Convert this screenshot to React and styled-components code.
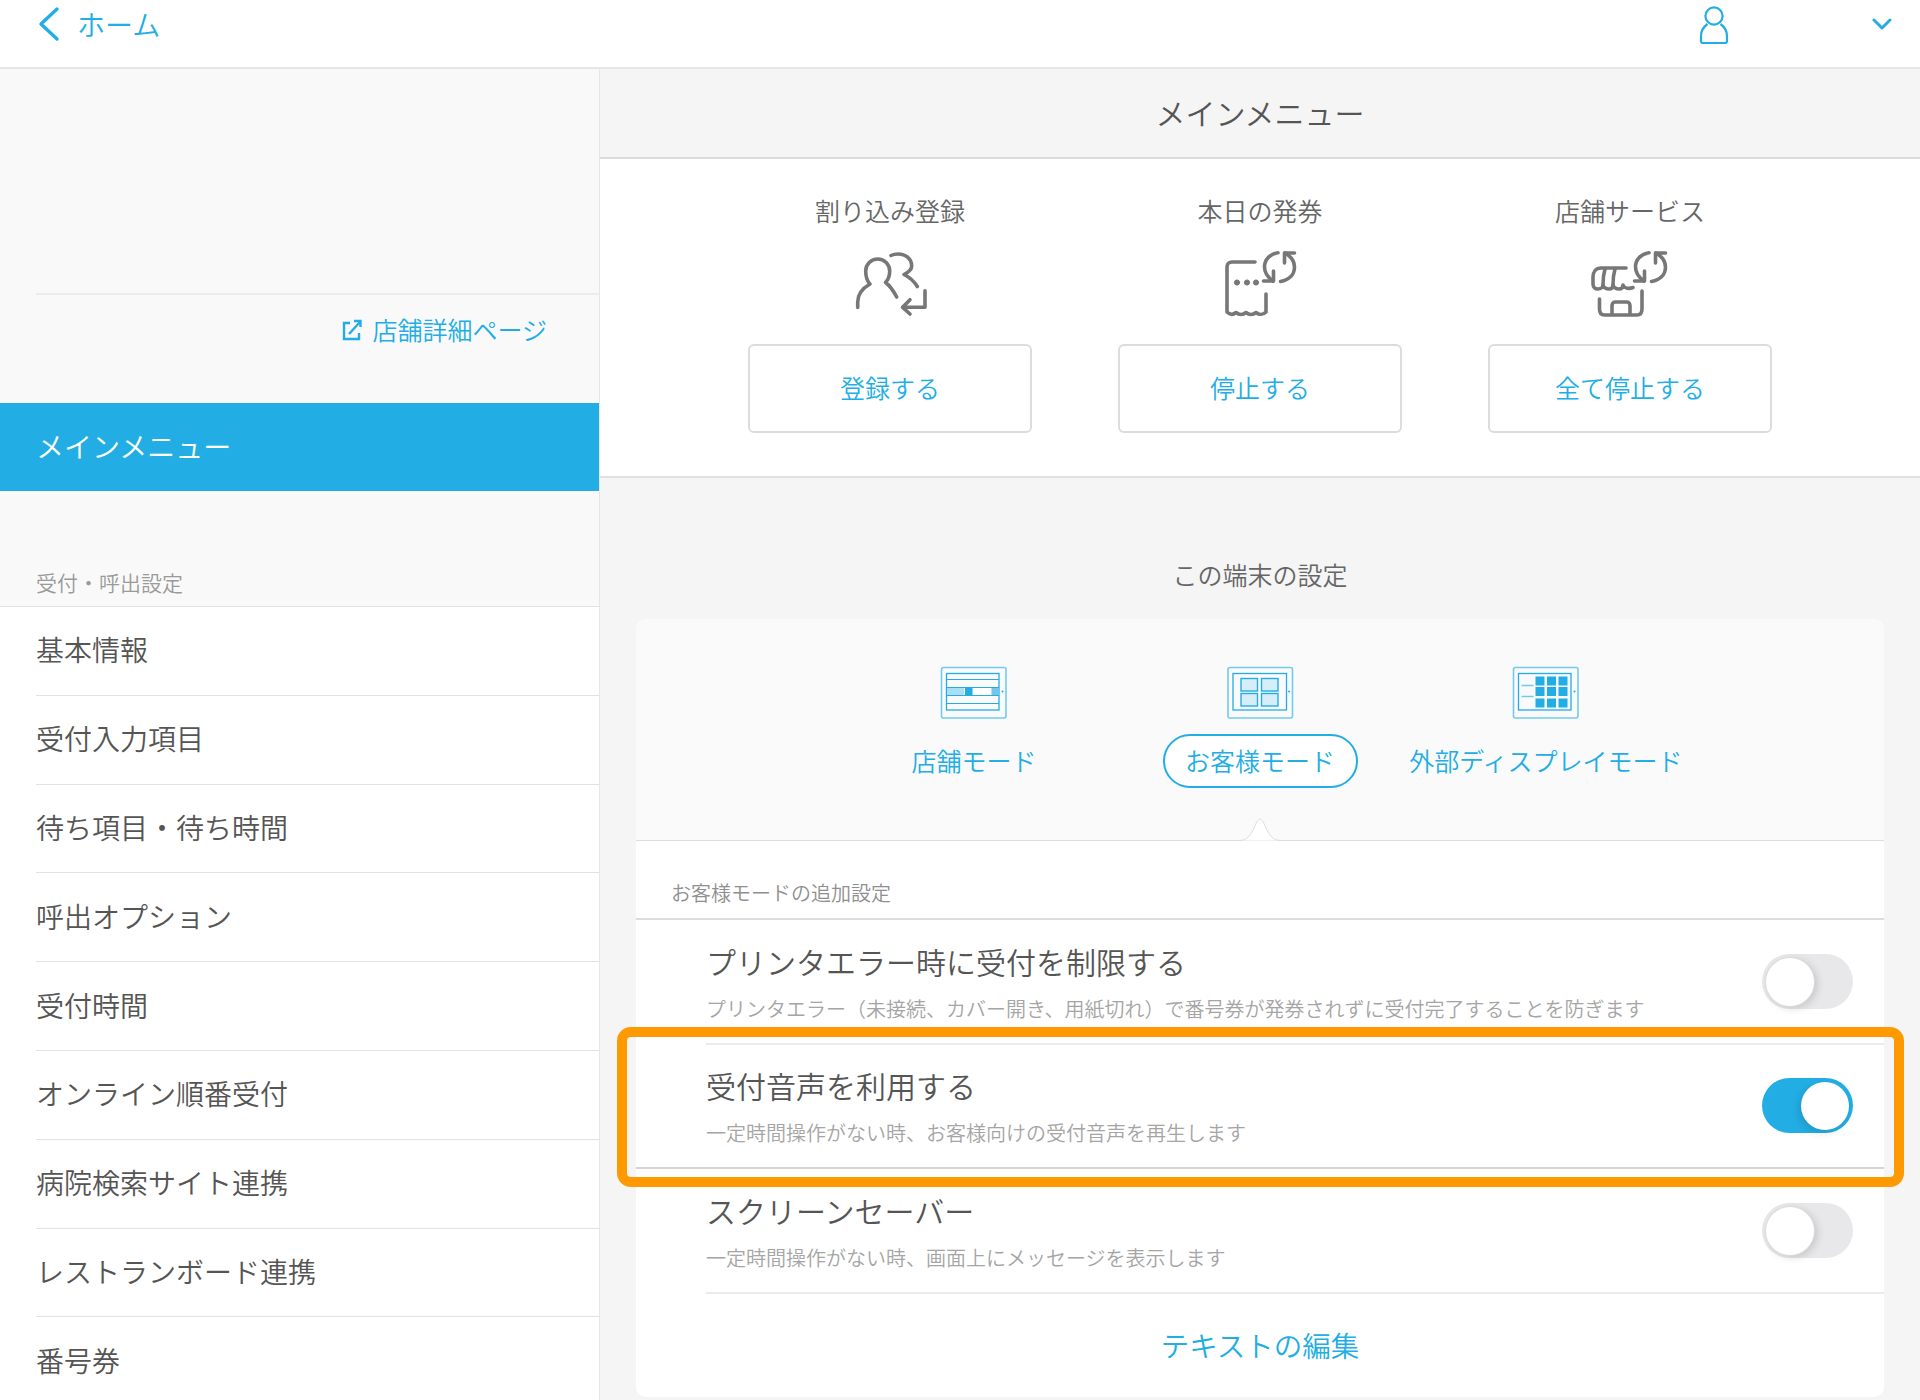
import React from "react";
import styled, { createGlobalStyle } from "styled-components";

const BLUE = "#22aee4";

const GlobalStyle = createGlobalStyle`
  html, body {
    margin: 0;
    padding: 0;
    background: #f5f5f5;
    font-family: "Noto Sans CJK JP", "Noto Sans", sans-serif;
    font-weight: 350;
  }
  * { box-sizing: border-box; }
`;

const Page = styled.div`
  position: relative;
  width: 1920px;
  height: 1400px;
  overflow: hidden;
`;

const TopBar = styled.header`
  display: flex;
  justify-content: space-between;
  align-items: flex-start;
  height: 69px;
  background: #fff;
  border-bottom: 2px solid #e6e6e6;
  padding: 5px 28px 0 36px;
  color: ${BLUE};
`;

const BackLink = styled.div`
  display: flex;
  align-items: center;
  gap: 15px;
  height: 38px;
  font-size: 28px;
`;

const UserArea = styled.div`
  display: flex;
  align-items: flex-start;
  gap: 143px;
`;

const Body = styled.div`
  display: flex;
  height: 1331px;
`;

const Sidebar = styled.aside`
  width: 600px;
  flex: none;
  background: #f9f9f9;
  border-right: 1px solid #e6e6e6;
`;

const ShopBox = styled.div`
  height: 224px;
`;

const ShopLink = styled.div`
  display: flex;
  align-items: flex-start;
  justify-content: flex-end;
  gap: 10px;
  height: 110px;
  margin-left: 36px;
  padding: 17px 52px 0 0;
  border-top: 2px solid #ececec;
  color: ${BLUE};
  font-size: 25px;
  line-height: 34px;
`;

const ActiveItem = styled.div`
  display: flex;
  align-items: center;
  height: 88px;
  padding: 0 0 3px 36px;
  background: ${BLUE};
  color: #fff;
  font-size: 28px;
`;

const GroupLabel = styled.div`
  display: flex;
  align-items: flex-end;
  height: 116px;
  padding: 0 0 9px 36px;
  border-bottom: 1px solid #e2e2e2;
  color: #9a9a9a;
  font-size: 21px;
  line-height: 30px;
`;

const MenuRow = styled.div`
  height: 88.8px;
  background: #fff;
`;

const MenuText = styled.div`
  display: flex;
  align-items: center;
  height: 88.8px;
  margin-left: 36px;
  padding-bottom: 3px;
  border-bottom: 1px solid #e2e2e2;
  color: #555;
  font-size: 28px;
`;

const Main = styled.main`
  flex: 1;
  display: flex;
  flex-direction: column;
  align-items: center;
`;

const MainTitle = styled.div`
  display: flex;
  align-items: center;
  justify-content: center;
  width: 100%;
  height: 90px;
  padding-bottom: 3px;
  border-bottom: 2px solid #dcdcdc;
  color: #555;
  font-size: 30px;
`;

const ActionPanel = styled.section`
  display: grid;
  grid-template-columns: repeat(3, 370px);
  justify-content: center;
  width: 100%;
  height: 319px;
  padding-top: 34px;
  background: #fff;
  border-bottom: 2px solid #e0e0e0;
`;

const ActionCol = styled.div`
  display: flex;
  flex-direction: column;
  align-items: center;
  color: #666;
  font-size: 25px;
  line-height: 34px;
`;

const ActionIcon = styled.svg`
  display: block;
  margin: 17px 0 20px;
  fill: none;
  stroke: #777;
  stroke-width: 3.6;
  stroke-linecap: round;
  stroke-linejoin: round;
`;

const ActionButton = styled.div`
  display: flex;
  align-items: center;
  justify-content: center;
  width: 284px;
  height: 89px;
  padding-bottom: 3px;
  background: #fff;
  border: 2px solid #dcdcdc;
  border-radius: 6px;
  color: ${BLUE};
  font-size: 25px;
`;

const SectionTitle = styled.div`
  margin-top: 79px;
  height: 34px;
  color: #666;
  font-size: 25px;
  line-height: 34px;
`;

const SettingsCard = styled.section`
  width: 1248px;
  height: 778px;
  margin-top: 28px;
  background: #fff;
  border-radius: 10px;
  overflow: hidden;
`;

const ModeTabs = styled.div`
  position: relative;
  display: grid;
  grid-template-columns: repeat(3, 286px);
  justify-content: center;
  height: 222px;
  padding-top: 40px;
  background: #fafafa;
  border-bottom: 1px solid #dedede;
`;

const ModeTab = styled.div`
  display: flex;
  flex-direction: column;
  align-items: center;
`;

const ModeIcon = styled.svg`
  display: block;
  margin-bottom: 11px;
  fill: none;
`;

const ModeLabel = styled.div`
  display: flex;
  align-items: center;
  justify-content: center;
  height: 54px;
  padding-bottom: 2px;
  width: ${(p) => (p.$active ? "195px" : "auto")};
  border: 2px solid ${(p) => (p.$active ? BLUE : "transparent")};
  border-radius: 27px;
  background: ${(p) => (p.$active ? "#fff" : "transparent")};
  color: ${BLUE};
  font-size: 25px;
  white-space: nowrap;
`;

const TabCaret = styled.svg`
  position: absolute;
  left: 50%;
  bottom: -1px;
  margin-left: -22px;
`;

const AddonLabel = styled.div`
  display: flex;
  align-items: flex-end;
  height: 79px;
  padding: 0 0 10px 35px;
  border-bottom: 2px solid #dcdcdc;
  color: #8f8f8f;
  font-size: 20px;
  line-height: 30px;
`;

const SettingRow = styled.div`
  display: flex;
  align-items: center;
  justify-content: space-between;
  height: 124.5px;
  margin-left: ${(p) => (p.$flush ? "0" : "70px")};
  padding: 0 31px 0 ${(p) => (p.$flush ? "70px" : "0")};
  border-bottom: ${(p) => (p.$flush ? "2px solid #d4d4d4" : "2px solid #ebebeb")};
`;

const SettingTitle = styled.div`
  color: #555;
  font-size: 30px;
  line-height: 42px;
`;

const SettingHint = styled.div`
  margin-top: 13px;
  color: #a5a5a5;
  font-size: 20px;
  line-height: 28px;
`;

const Toggle = styled.div`
  position: relative;
  width: 91px;
  height: 55px;
  flex: none;
  border-radius: 28px;
  background: ${(p) => (p.$on ? BLUE : "#e8e8ea")};
`;

const Knob = styled.div`
  position: absolute;
  top: 4px;
  left: ${(p) => (p.$on ? "39px" : "4px")};
  width: 48px;
  height: 48px;
  border-radius: 50%;
  background: #fff;
  box-shadow: ${(p) =>
    p.$on
      ? "-3px 3px 8px rgba(0,0,0,.12)"
      : "0 0 0 1px #dcdcdc, 3px 2px 8px rgba(0,0,0,.16)"};
`;

const EditLink = styled.div`
  display: flex;
  align-items: center;
  justify-content: center;
  height: 105px;
  padding-bottom: 4px;
  color: ${BLUE};
  font-size: 28.5px;
`;

const Highlight = styled.div`
  position: absolute;
  left: 617px;
  top: 1027px;
  width: 1287px;
  height: 160px;
  border: 10px solid #ff9900;
  border-radius: 14px;
  pointer-events: none;
`;

const menuItems = [
  "基本情報",
  "受付入力項目",
  "待ち項目・待ち時間",
  "呼出オプション",
  "受付時間",
  "オンライン順番受付",
  "病院検索サイト連携",
  "レストランボード連携",
  "番号券",
];

const refreshArrows = (dx = 0) => (
  <g transform={`translate(${dx} 0)`}>
    <path d="M68 8.8C60 10 54.5 15.5 54.5 23C54.5 28.5 58 33.5 63 37" />
    <path d="M63.5 27V37H53.5" />
    <path d="M70.5 37.5C78.5 36 84.5 31 84.5 23C84.5 17.5 81 12.5 75 9" />
    <path d="M74.5 19V9H84.5" />
  </g>
);

const QueueIcon = () => (
  <ActionIcon width="100" height="80" viewBox="0 0 100 80">
    <path d="M17.7 63.5V58C17.7 49 23 44 30 40C27 37 25.7 32 25.7 27A12 12 0 0 1 49.7 27C49.7 32 48 36 45.5 38.5C49 41 53 46 56.7 53" />
    <path d="M51 11.5C53 10.5 55 10 58 10C66 10 71.7 15 71.7 22C71.7 25 69 28 64 30.5C69 33 74 37 77.3 42.5" />
    <path d="M85 46.7V63.3H62.7" />
    <path d="M70 55.7L62.7 63.3L70 70" />
  </ActionIcon>
);

const TicketIcon = () => (
  <ActionIcon width="100" height="80" viewBox="0 0 100 80">
    <path d="M45 18H22C19 18 17 20 17 23V68C20 71 23 71 26 68.5C29 71 33 71 36 68.5C39 71 43 71 46 68.5C49 71 53 71 56 68V50" />
    <circle cx="27" cy="38.5" r="2.6" fill="#777" strokeWidth="1" />
    <circle cx="37" cy="38.5" r="2.6" fill="#777" strokeWidth="1" />
    <circle cx="46" cy="38.5" r="2.6" fill="#777" strokeWidth="1" />
    {refreshArrows()}
  </ActionIcon>
);

const ShopIcon = () => (
  <ActionIcon width="100" height="80" viewBox="0 0 100 80">
    <path d="M46 24H21C16 24 13 28 13 33V40C13 43 15 45 18 45C21 45 23 43 23 41C23 43 26 45 29 45C32 45 33 43 33 41C33 43 36 45 39 45C42 45 43 43 43 41C44 44 48 45.5 53 43.5" />
    <path d="M25 25C23.5 30 23 36 23 41M35 25C33.5 30 33 36 33 41" />
    <path d="M19.5 55V65C19.5 69 21.5 71 24.5 71H57C60 71 62 69 62 65V47" />
    <path d="M32 69V62C32 60 33 58 35 58H47C49 58 50 60 50 62V69" />
    {refreshArrows(1)}
  </ActionIcon>
);

const ModeFrame = ({ x1, x2 }) => (
  <>
    <rect x={x1} y="8.5" width="64.5" height="50.5" rx="2" stroke="#72cbee" strokeWidth="1.6" />
    <rect x={x1 + 5} y="14.5" width={x2 - x1 - 5} height="36.5" stroke={BLUE} strokeWidth="1.3" />
    <circle cx={x1 + 61} cy="32.5" r="1" fill={BLUE} />
  </>
);

const ShopModeIcon = () => (
  <ModeIcon width="80" height="64" viewBox="0 0 80 64">
    <ModeFrame x1={7.5} x2={65} />
    <path d="M12.5 20.5H65M12.5 28.5H65M12.5 36.5H65M12.5 44.5H65" stroke={BLUE} strokeWidth="1.2" />
    <rect x="13" y="29" width="17" height="7" fill="#a8dff5" />
    <rect x="31" y="29" width="7.5" height="7" fill={BLUE} />
    <rect x="39.5" y="29.5" width="7" height="6.5" fill="#fff" />
    <rect x="48.5" y="29.5" width="7" height="6.5" fill="#fff" />
    <rect x="57.5" y="29" width="7.5" height="7" fill="#72c6ea" />
  </ModeIcon>
);

const CustomerModeIcon = () => (
  <ModeIcon width="80" height="64" viewBox="0 0 80 64">
    <ModeFrame x1={8} x2={66.5} />
    {[21, 41.5].map((x) =>
      [19.5, 34.5].map((y) => (
        <rect key={`${x}-${y}`} x={x} y={y} width="16.5" height="12.5" fill="#d6eef9" stroke={BLUE} strokeWidth="1.4" />
      ))
    )}
  </ModeIcon>
);

const DisplayModeIcon = () => (
  <ModeIcon width="80" height="64" viewBox="0 0 80 64">
    <ModeFrame x1={7.5} x2={65} />
    <path d="M15.5 26.5H27.5M15.5 37.5H27.5" stroke="#72cbee" strokeWidth="1.6" />
    {[29.5, 41, 52.5].map((x) =>
      [17.5, 28, 39.5].map((y) => (
        <rect key={`${x}-${y}`} x={x} y={y} width="9" height="9" fill={BLUE} />
      ))
    )}
  </ModeIcon>
);

const App = () => {
  return (
    <Page>
      <GlobalStyle />
      <TopBar>
        <BackLink>
          <svg width="26" height="36" viewBox="0 0 26 36" fill="none" stroke={BLUE} strokeWidth="3.4" strokeLinecap="round" strokeLinejoin="round">
            <path d="M21 3L5 18L21 33" />
          </svg>
          ホーム
        </BackLink>
        <UserArea>
          <svg width="30" height="40" viewBox="0 0 30 40" fill="none" stroke={BLUE} strokeWidth="2.2" style={{ marginTop: 1 }}>
            <circle cx="15" cy="10" r="8.6" />
            <path d="M8.5 18C4.5 21 2 25 2 30V35C2 36 3 37 4 37H26C27 37 28 36 28 35V30C28 25 25.5 21 21.5 18" />
          </svg>
          <svg width="20" height="12" viewBox="0 0 20 12" fill="none" stroke={BLUE} strokeWidth="3" strokeLinecap="round" strokeLinejoin="round" style={{ marginTop: 13 }}>
            <path d="M2 2L10 10L18 2" />
          </svg>
        </UserArea>
      </TopBar>
      <Body>
        <Sidebar>
          <ShopBox />
          <ShopLink>
            <svg width="20" height="34" viewBox="0 0 20 34" fill="none" stroke={BLUE} strokeWidth="2.4">
              <path d="M8 11H2V27H17V21" />
              <path d="M7 22L18 10M12 9H18.5V15" />
            </svg>
            店舗詳細ページ
          </ShopLink>
          <ActiveItem>メインメニュー</ActiveItem>
          <GroupLabel>受付・呼出設定</GroupLabel>
          {menuItems.map((item) => (
            <MenuRow key={item}>
              <MenuText>{item}</MenuText>
            </MenuRow>
          ))}
        </Sidebar>
        <Main>
          <MainTitle>メインメニュー</MainTitle>
          <ActionPanel>
            <ActionCol>
              割り込み登録
              <QueueIcon />
              <ActionButton>登録する</ActionButton>
            </ActionCol>
            <ActionCol>
              本日の発券
              <TicketIcon />
              <ActionButton>停止する</ActionButton>
            </ActionCol>
            <ActionCol>
              店舗サービス
              <ShopIcon />
              <ActionButton>全て停止する</ActionButton>
            </ActionCol>
          </ActionPanel>
          <SectionTitle>この端末の設定</SectionTitle>
          <SettingsCard>
            <ModeTabs>
              <ModeTab>
                <ShopModeIcon />
                <ModeLabel>店舗モード</ModeLabel>
              </ModeTab>
              <ModeTab>
                <CustomerModeIcon />
                <ModeLabel $active>お客様モード</ModeLabel>
              </ModeTab>
              <ModeTab>
                <DisplayModeIcon />
                <ModeLabel>外部ディスプレイモード</ModeLabel>
              </ModeTab>
              <TabCaret width="44" height="24" viewBox="0 0 44 24">
                <path d="M0 23.5C8 23.5 10 21 14 15C17 10 19 2 22 2C25 2 27 10 30 15C34 21 36 23.5 44 23.5" fill="#fff" stroke="#dedede" strokeWidth="1" />
              </TabCaret>
            </ModeTabs>
            <AddonLabel>お客様モードの追加設定</AddonLabel>
            <SettingRow>
              <div>
                <SettingTitle>プリンタエラー時に受付を制限する</SettingTitle>
                <SettingHint>プリンタエラー（未接続、カバー開き、用紙切れ）で番号券が発券されずに受付完了することを防ぎます</SettingHint>
              </div>
              <Toggle>
                <Knob />
              </Toggle>
            </SettingRow>
            <SettingRow $flush>
              <div>
                <SettingTitle>受付音声を利用する</SettingTitle>
                <SettingHint>一定時間操作がない時、お客様向けの受付音声を再生します</SettingHint>
              </div>
              <Toggle $on>
                <Knob $on />
              </Toggle>
            </SettingRow>
            <SettingRow>
              <div>
                <SettingTitle>スクリーンセーバー</SettingTitle>
                <SettingHint>一定時間操作がない時、画面上にメッセージを表示します</SettingHint>
              </div>
              <Toggle>
                <Knob />
              </Toggle>
            </SettingRow>
            <EditLink>テキストの編集</EditLink>
          </SettingsCard>
        </Main>
      </Body>
      <Highlight />
    </Page>
  );
};

export default App;
